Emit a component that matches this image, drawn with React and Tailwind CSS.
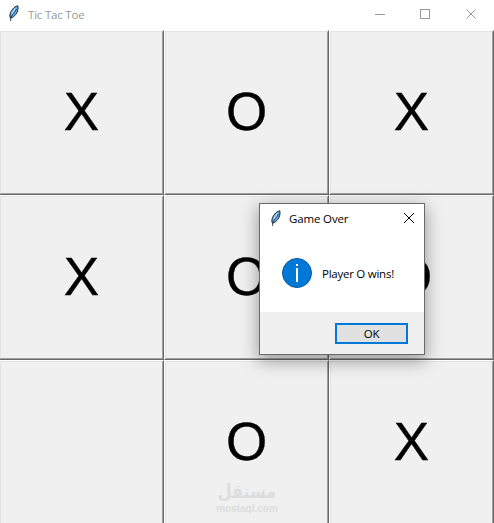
const board = ["X", "O", "X", "X", "O", "O", "", "O", "X"];

const Feather = () => (
  <svg width="12" height="17" viewBox="0 0 12 17" className="shrink-0">
    <path d="M9.800 .8C6 1.400 2.200 6 1.800 11l.7 2.200C6.800 12 11 7 9.800 .8Z" fill="#62aeea" stroke="#1c2530" strokeWidth="1" />
    <path d="M7.500 3.500 3.700 9" stroke="#a9d8fb" strokeWidth="1.500" />
    <path d="M8.500 4C6.500 7.500 4 10 2.900 12.500L2.500 16" fill="none" stroke="#1a2430" strokeWidth="0.800" />
  </svg>
);

const TitleBar = () => (
  <div className="flex h-[30px] shrink-0 bg-white pl-2 text-[#999999]">
    <div className="mt-[5px]">
      <Feather />
    </div>
    <span className="ml-2 mt-[6px] text-[11.5px] leading-[18px] tracking-[-0.2px]">Tic Tac Toe</span>
    <svg width="102" height="12" viewBox="0 0 102 12" className="ml-auto mr-[17px] mt-[8px]" fill="none" stroke="#999999">
      <path d="M0 6.500H10" />
      <rect x="45.500" y="1.500" width="9" height="9" />
      <path d="m91.500 1.500 9 9m0-9-9 9" />
    </svg>
  </div>
);

const Cell = ({ value }) => (
  <div className="h-[165px] border border-t-white border-l-white border-r-[#696969] border-b-[#696969]">
    <div className="flex h-full items-center justify-center border border-t-[#e3e3e3] border-l-[#e3e3e3] border-r-[#a0a0a0] border-b-[#a0a0a0] bg-[#f0f0f0] pb-[3px] font-['Liberation_Sans',sans-serif] text-[53px] leading-none text-black [-webkit-text-stroke:0.4px_black]">
      {value}
    </div>
  </div>
);

const Watermark = () => (
  <div className="absolute top-[484px] left-[216px] flex w-[62px] flex-col items-center text-[#dddddd]">
    <div dir="rtl" className="origin-bottom scale-y-[1.2] font-['DejaVu_Sans',sans-serif] text-[16px] leading-[19px] font-bold whitespace-nowrap">
      مستقل
    </div>
    <div className="font-['Liberation_Sans',sans-serif] text-[10px] leading-[12px] font-bold">mostaql.com</div>
  </div>
);

const Dialog = () => (
  <div className="absolute top-[203px] left-[259px] flex h-[152px] w-[166px] flex-col border border-[#696969] bg-white text-black shadow-[0_5px_16px_1px_rgba(0,0,0,0.36)]">
    <div className="flex h-[30px] pl-[10px]">
      <div className="mt-[6px]">
        <Feather />
      </div>
      <span className="ml-[7px] mt-[6px] text-[11.5px] leading-[18px] tracking-[-0.15px] whitespace-nowrap">Game Over</span>
      <svg width="12" height="12" viewBox="0 0 12 12" className="ml-auto mr-[9px] mt-[8px]" stroke="black">
        <path d="m1 1 10 10M11 1 1 11" />
      </svg>
    </div>
    <div className="flex flex-1 pl-[22px] pt-[24px]">
      <svg width="30" height="30" viewBox="0 0 30 30" className="shrink-0">
        <circle cx="15" cy="15" r="14.500" fill="#0078d7" stroke="#0b579b" />
        <path d="M15 10v14" stroke="white" strokeWidth="2" />
        <path d="M14 6h2v2h-2z" fill="white" />
      </svg>
      <span className="ml-[10px] mt-[7px] text-[11.5px] leading-[18px] tracking-[-0.25px] whitespace-nowrap">Player O wins!</span>
    </div>
    <div className="flex h-[42px] justify-end bg-[#f0f0f0] pr-4 pt-[11px]">
      <button className="h-[21px] w-[73px] border-2 border-[#0078d7] bg-[#e1e1e1] text-[11.5px] leading-[18px] tracking-[-0.3px]">OK</button>
    </div>
  </div>
);

export default function App() {
  return (
    <div className="relative flex h-[523px] w-[494px] flex-col overflow-hidden bg-[#f0f0f0] font-['Open_Sans',sans-serif]">
      <TitleBar />
      <div className="-ml-px grid w-[495px] shrink-0 grid-cols-3">
        {board.map((value, i) => (
          <Cell key={i} value={value} />
        ))}
      </div>
      <Watermark />
      <Dialog />
    </div>
  );
}
